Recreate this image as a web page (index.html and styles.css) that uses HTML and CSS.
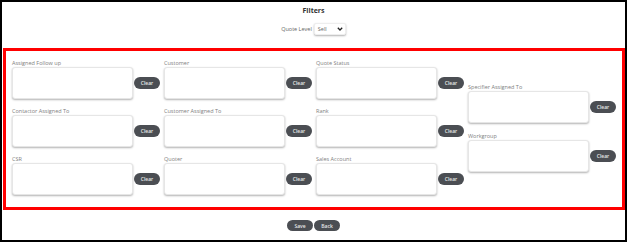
FILE: index.html
```html
<!DOCTYPE html>
<html lang="en">

<head>
    <meta charset="utf-8">
    <meta name="viewport" content="width=device-width, initial-scale=1.0">
    <title>Filters</title>
    <link rel="stylesheet" href="styles.css">
</head>

<body>
    <div class="page">
        <h1 class="title">Filters</h1>

        <div class="level">
            <span class="level-label">Quote Level</span>
            <div class="select">
                <span>Sell</span>
                <svg width="6" height="4" viewBox="0 0 6 4">
                    <path d="M0.8 0.8 L3 3 L5.2 0.8" fill="none" stroke="#222" stroke-width="1.3" />
                </svg>
            </div>
        </div>

        <section class="filters">
            <div class="grid">
                <div class="field">
                    <label>Assigned Follow up</label>
                    <div class="field-row"><textarea></textarea><button class="clear">Clear</button></div>
                </div>
                <div class="field">
                    <label>Customer</label>
                    <div class="field-row"><textarea></textarea><button class="clear">Clear</button></div>
                </div>
                <div class="field">
                    <label>Quote Status</label>
                    <div class="field-row"><textarea></textarea><button class="clear">Clear</button></div>
                </div>
                <div class="field">
                    <label>Contactor Assigned To</label>
                    <div class="field-row"><textarea></textarea><button class="clear">Clear</button></div>
                </div>
                <div class="field">
                    <label>Customer Assigned To</label>
                    <div class="field-row"><textarea></textarea><button class="clear">Clear</button></div>
                </div>
                <div class="field">
                    <label>Rank</label>
                    <div class="field-row"><textarea></textarea><button class="clear">Clear</button></div>
                </div>
                <div class="field">
                    <label>CSR</label>
                    <div class="field-row"><textarea></textarea><button class="clear">Clear</button></div>
                </div>
                <div class="field">
                    <label>Quoter</label>
                    <div class="field-row"><textarea></textarea><button class="clear">Clear</button></div>
                </div>
                <div class="field">
                    <label>Sales Account</label>
                    <div class="field-row"><textarea></textarea><button class="clear">Clear</button></div>
                </div>
            </div>

            <div class="side">
                <div class="field">
                    <label>Specifier Assigned To</label>
                    <div class="field-row"><textarea></textarea><button class="clear">Clear</button></div>
                </div>
                <div class="field">
                    <label>Workgroup</label>
                    <div class="field-row"><textarea></textarea><button class="clear">Clear</button></div>
                </div>
            </div>
        </section>

        <div class="actions">
            <button class="btn">Save</button>
            <button class="btn">Back</button>
        </div>
    </div>
</body>

</html>
```

FILE: styles.css
```css
* {
    box-sizing: border-box;
}

body {
    margin: 0;
    font-family: 'Open Sans', sans-serif;
    background: #fff;
}

.page {
    width: 627px;
    height: 242px;
    border: 2px solid #000;
}

.title {
    margin: 0;
    padding-top: 4px;
    font-size: 7px;
    line-height: 9px;
    font-weight: 700;
    color: #333;
    text-align: center;
}

.level {
    display: flex;
    justify-content: center;
    align-items: center;
    gap: 2px;
    margin-top: 7px;
    height: 14px;
}

.level-label {
    font-size: 5.5px;
    color: #666;
}

.select {
    width: 32px;
    height: 12px;
    display: flex;
    justify-content: space-between;
    align-items: center;
    padding: 0 2px 0 3px;
    font-size: 5.5px;
    color: #666;
    background: #fff;
    border: 1px solid #eee;
    border-radius: 2px;
    box-shadow: 0 1px 2px rgba(0, 0, 0, .3);
}

.filters {
    display: flex;
    align-items: center;
    width: 622px;
    margin: 12px 0 0 1px;
    padding: 8px 6px 12px;
    border: 3px solid #f00;
}

.grid {
    display: grid;
    grid-template-columns: repeat(3, 152px);
    row-gap: 8px;
}

.side {
    display: flex;
    flex-direction: column;
    gap: 9px;
}

.field label {
    display: block;
    height: 8px;
    font-size: 5.5px;
    line-height: 8px;
    color: #808080;
}

.field-row {
    display: flex;
    align-items: center;
}

textarea {
    width: 121px;
    height: 32px;
    resize: none;
    background: #fff;
    border: 1px solid #e6e6e6;
    border-radius: 3px;
    box-shadow: 0 1px 2px rgba(0, 0, 0, .3);
}

.clear,
.btn {
    height: 12px;
    padding: 0;
    border: none;
    border-radius: 6px;
    background: #4b4e53;
    color: #e8e8e8;
    font-family: 'Open Sans', sans-serif;
    font-size: 5px;
    font-weight: 600;
}

.clear {
    width: 26px;
    margin-left: 1px;
}

.actions {
    display: flex;
    justify-content: center;
    gap: 1px;
    margin-top: 10px;
}

.btn {
    width: 26px;
    height: 11px;
}
```
